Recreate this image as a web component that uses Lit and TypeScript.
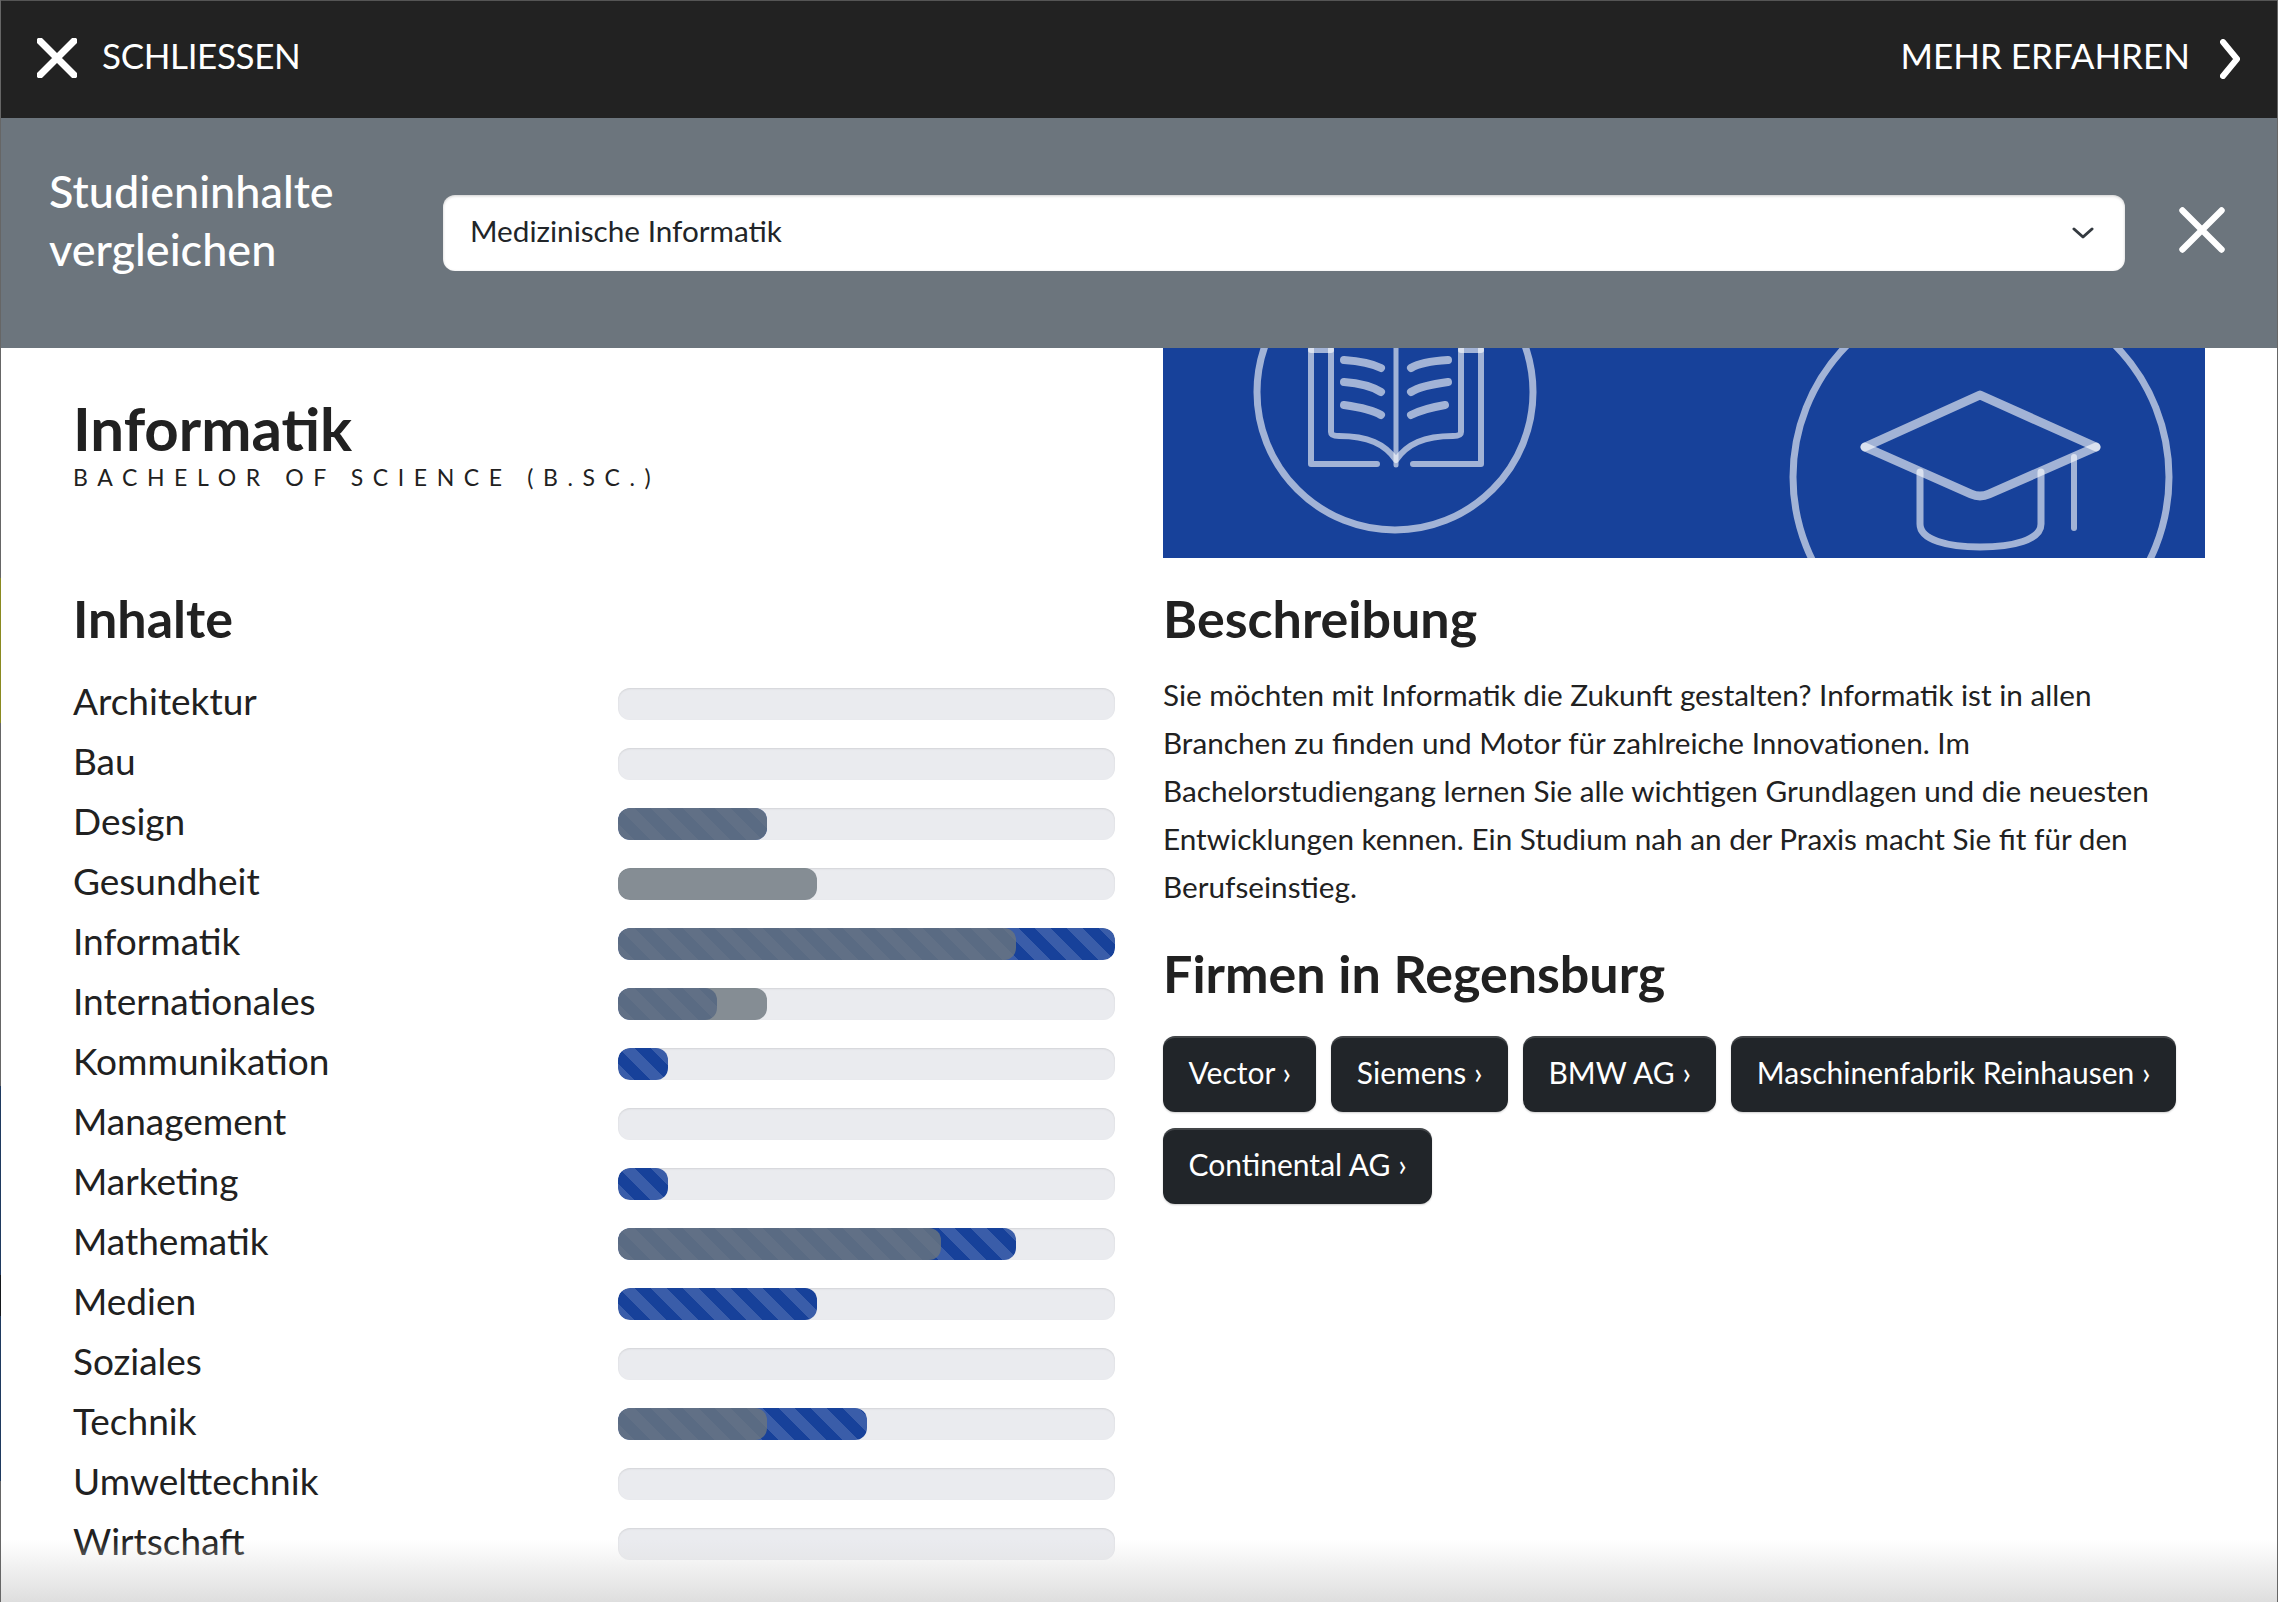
import { LitElement, html, css, svg } from 'lit';
import { customElement } from 'lit/decorators.js';

const SUBJECTS = [
  { name: 'Architektur', blue: 0, gray: 0 },
  { name: 'Bau', blue: 0, gray: 0 },
  { name: 'Design', blue: 30, gray: 30 },
  { name: 'Gesundheit', blue: 0, gray: 40 },
  { name: 'Informatik', blue: 100, gray: 80 },
  { name: 'Internationales', blue: 20, gray: 30 },
  { name: 'Kommunikation', blue: 10, gray: 0 },
  { name: 'Management', blue: 0, gray: 0 },
  { name: 'Marketing', blue: 10, gray: 0 },
  { name: 'Mathematik', blue: 80, gray: 65 },
  { name: 'Medien', blue: 40, gray: 0 },
  { name: 'Soziales', blue: 0, gray: 0 },
  { name: 'Technik', blue: 50, gray: 30 },
  { name: 'Umwelttechnik', blue: 0, gray: 0 },
  { name: 'Wirtschaft', blue: 0, gray: 0 },
];

const FIRMS = ['Vector', 'Siemens', 'BMW AG', 'Maschinenfabrik Reinhausen', 'Continental AG'];

const closeIcon = (cls: string) => html`
  <svg class=${cls} viewBox="0 0 40 40" fill="none" stroke="#fff" stroke-linecap="round">
    <path d="M3 3 L37 37 M37 3 L3 37" />
  </svg>
`;

// banner art, coordinates follow the 1042x210 picture
const bannerArt = svg`
  <circle cx="232" cy="44" r="138" stroke-width="7" />
  <path stroke-width="6" d="M148 -10 V116 H214 M250 116 H318 V-10" />
  <path stroke-width="6" d="M148 2 H168 M318 2 H298" />
  <path stroke-width="6" d="M168 -10 V84 Q168 88 176 88 C205 88 222 96 233 112 C244 96 261 88 290 88 Q298 88 298 84 V-10" />
  <path stroke-width="5" d="M233 -10 V117" />
  <path stroke-width="8" d="M181 12 C195 13 210 16 218 20 M181 34 C195 35 210 39 218 44 M181 57 C195 59 210 62 218 67" />
  <path stroke-width="8" d="M248 20 C256 15 270 13 285 12 M248 44 C256 39 270 36 285 34 M248 67 C256 63 270 59 282 57" />
  <circle cx="818" cy="129" r="188" stroke-width="7" />
  <path stroke-width="9" d="M702 99 L817 47 L933 99" />
  <path stroke-width="9" d="M702 99 L808 146 Q817 150 826 146 L933 99" />
  <path stroke-width="7" d="M757 124 V176 C757 192 785 199 817 199 C850 199 878 192 878 176 V124" />
  <path stroke-width="6" d="M911 109 V180" />
`;

@customElement('app-root')
export class AppRoot extends LitElement {
  static styles = css`
    :host {
      display: block;
      position: relative;
      width: 2278px;
      height: 1602px;
      overflow: hidden;
      background: #fff;
      font-family: 'Lato', 'Open Sans', sans-serif;
      color: #212121;
    }

    .topbar {
      height: 118px;
      box-sizing: border-box;
      border-top: 1px solid #555;
      background: #222;
      color: #fff;
      display: flex;
      align-items: center;
      justify-content: space-between;
      padding: 0 38px 4px 37px;
      font-size: 35px;
      font-weight: 400;
    }

    .top-left,
    .top-right {
      display: flex;
      align-items: center;
    }

    .top-left span,
    .top-right span {
      margin-bottom: 6px;
    }

    .top-left span {
      letter-spacing: -0.35px;
    }

    .top-close {
      width: 40px;
      height: 40px;
      margin-right: 25px;
      stroke-width: 7px;
    }

    .top-chevron {
      width: 20px;
      height: 40px;
      margin-left: 30px;
      margin-top: 3px;
    }

    .compare {
      height: 230px;
      box-sizing: border-box;
      background: #6c757d;
      display: flex;
      align-items: center;
      padding: 0 53px 0 49px;
    }

    .compare h2 {
      margin: 0 0 26px 0;
      width: 394px;
      font-size: 45px;
      line-height: 58px;
      font-weight: 500;
      color: #fff;
    }

    .select {
      flex: 1;
      height: 76px;
      box-sizing: border-box;
      border-radius: 12px;
      background: #fff;
      box-shadow: inset 0 1px 3px rgba(0, 0, 0, 0.2);
      display: flex;
      align-items: center;
      justify-content: space-between;
      padding: 0 31px 6px 27px;
      font-size: 29.7px;
      color: #212529;
    }

    .select svg {
      width: 22px;
      height: 14px;
      margin-top: 6px;
    }

    .compare-close {
      width: 46px;
      height: 46px;
      margin-left: 54px;
      margin-bottom: 7px;
      stroke-width: 5.5px;
    }

    .content {
      display: grid;
      grid-template-columns: 1042px 1042px;
      column-gap: 48px;
      padding: 0 0 0 73px;
    }

    .title {
      padding-top: 44px;
      height: 210px;
      box-sizing: border-box;
    }

    h1 {
      margin: 0;
      font-size: 60px;
      line-height: 73px;
      font-weight: 700;
    }

    .subtitle {
      font-size: 23px;
      line-height: 24px;
      letter-spacing: 9.6px;
      font-weight: 400;
      text-transform: uppercase;
    }

    .banner {
      display: block;
      width: 1042px;
      height: 210px;
      background: #17419a;
    }

    .banner g {
      fill: none;
      stroke: #fff;
      stroke-opacity: 0.6;
      stroke-linecap: round;
      stroke-linejoin: round;
    }

    h3 {
      margin: 0;
      font-size: 52px;
      line-height: 60px;
      font-weight: 700;
    }

    .skills {
      padding-top: 30px;
      width: 1042px;
    }

    .rows {
      margin-top: 30px;
      display: grid;
      row-gap: 28px;
    }

    .row {
      display: grid;
      grid-template-columns: 545px 497px;
      align-items: center;
      height: 32px;
      font-size: 37px;
    }

    .row span {
      margin-bottom: 6px;
    }

    .track {
      position: relative;
      height: 32px;
      border-radius: 12px;
      overflow: hidden;
      background: #eaebef;
      box-shadow: inset 0 1px 2px rgba(0, 0, 0, 0.1);
    }

    .fill {
      position: absolute;
      left: 0;
      top: 0;
      bottom: 0;
      border-radius: 12px;
    }

    .fill.blue {
      background-color: #17419a;
      background-image: linear-gradient(
        45deg,
        rgba(255, 255, 255, 0.15) 25%,
        transparent 25%,
        transparent 50%,
        rgba(255, 255, 255, 0.15) 50%,
        rgba(255, 255, 255, 0.15) 75%,
        transparent 75%,
        transparent
      );
      background-size: 32px 32px;
    }

    .fill.gray {
      background-color: #6c757d;
      opacity: 0.8;
    }

    .about {
      padding-top: 30px;
    }

    .about p {
      margin: 23px 0 0 0;
      font-size: 29.7px;
      line-height: 48px;
      color: #212121;
      width: 1000px;
    }

    .firms-title {
      margin-top: 32px;
    }

    .firms {
      margin-top: 33px;
      display: flex;
      flex-wrap: wrap;
      gap: 16px 15px;
    }

    .firm {
      height: 76px;
      box-sizing: border-box;
      padding: 0 25.5px 4px;
      border-radius: 12px;
      background: #212529;
      box-shadow: inset 0 2px 0 rgba(255, 255, 255, 0.15), 0 1px 2px rgba(0, 0, 0, 0.2);
      color: #fff;
      display: flex;
      align-items: center;
      font-size: 30px;
    }

    .fade {
      position: absolute;
      left: 0;
      right: 0;
      bottom: 0;
      height: 62px;
      background: linear-gradient(to bottom, rgba(222, 222, 222, 0), #dedede);
    }

    .edge {
      position: absolute;
      top: 0;
      bottom: 0;
      left: 0;
      width: 1px;
      background: linear-gradient(
        to bottom,
        #666 578px,
        #8a8a20 578px,
        #8a8a20 723px,
        #666 723px,
        #666 1086px,
        #1f3a60 1086px,
        #1f3a60 1275px,
        #15181c 1275px,
        #15181c 1316px,
        #1f3a60 1316px,
        #1f3a60 1481px,
        #666 1481px
      );
    }

    .edge.right {
      left: auto;
      right: 0;
      background: #666;
    }
  `;

  render() {
    return html`
      <div class="topbar">
        <div class="top-left">${closeIcon('top-close')}<span>SCHLIESSEN</span></div>
        <div class="top-right">
          <span>MEHR ERFAHREN</span>
          <svg class="top-chevron" viewBox="0 0 20 40" fill="none" stroke="#fff" stroke-width="6" stroke-linecap="round" stroke-linejoin="round">
            <path d="M3 3 L17 20 L3 37" />
          </svg>
        </div>
      </div>
      <div class="compare">
        <h2>Studieninhalte vergleichen</h2>
        <div class="select">
          <span>Medizinische Informatik</span>
          <svg viewBox="0 0 22 14" fill="none" stroke="#343a40" stroke-width="3" stroke-linecap="round" stroke-linejoin="round">
            <path d="M2 3 L11 11 L20 3" />
          </svg>
        </div>
        ${closeIcon('compare-close')}
      </div>
      <div class="content">
        <div class="title">
          <h1>Informatik</h1>
          <div class="subtitle">Bachelor of Science (B.Sc.)</div>
        </div>
        <svg class="banner" viewBox="0 0 1042 210"><g>${bannerArt}</g></svg>
        <div class="skills">
          <h3>Inhalte</h3>
          <div class="rows">
            ${SUBJECTS.map(
              (s) => html`
                <div class="row">
                  <span>${s.name}</span>
                  <div class="track">
                    ${s.blue ? html`<div class="fill blue" style="width:${s.blue}%"></div>` : ''}
                    ${s.gray ? html`<div class="fill gray" style="width:${s.gray}%"></div>` : ''}
                  </div>
                </div>
              `
            )}
          </div>
        </div>
        <div class="about">
          <h3>Beschreibung</h3>
          <p>
            Sie möchten mit Informatik die Zukunft gestalten? Informatik ist in allen Branchen zu finden und
            Motor für zahlreiche Innovationen. Im Bachelorstudiengang lernen Sie alle wichtigen Grundlagen und
            die neuesten Entwicklungen kennen. Ein Studium nah an der Praxis macht Sie fit für den Berufseinstieg.
          </p>
          <h3 class="firms-title">Firmen in Regensburg</h3>
          <div class="firms">
            ${FIRMS.map((f) => html`<div class="firm">${f} ›</div>`)}
          </div>
        </div>
      </div>
      <div class="fade"></div>
      <div class="edge"></div>
      <div class="edge right"></div>
    `;
  }
}
